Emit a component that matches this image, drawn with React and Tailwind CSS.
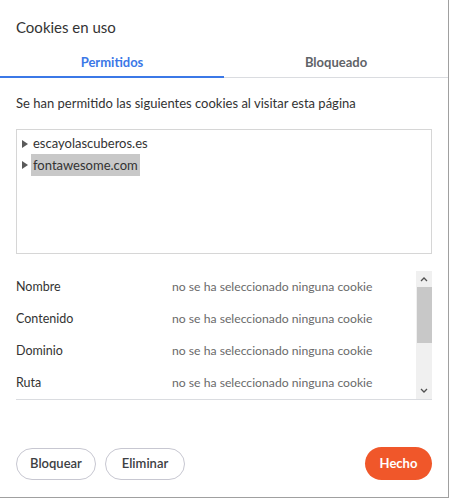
import React from 'react';

const rows = ['Nombre', 'Contenido', 'Dominio', 'Ruta'];

function Caret() {
  return (
    <svg width="6" height="8" viewBox="0 0 6 8" className="shrink-0">
      <path d="M0 0 L6 4 L0 8 Z" fill="#5a5a5a" />
    </svg>
  );
}

export default function App() {
  return (
    <div className="w-[450px] h-[499px] bg-white font-['Lato',sans-serif] text-[#333]">
      <div className="w-[449px] h-[498px] border-r border-b border-[#a0a0a0] flex flex-col">
        {/* Title */}
        <h1 className="px-4 pt-[16px] h-[50px] text-[15px] leading-[22px] text-[#333]">Cookies en uso</h1>

        {/* Tabs */}
        <div className="flex border-b border-[#dadce0] h-[28px]">
          <div className="w-[224px] flex justify-center text-[13px] font-bold text-[#3b78e7] border-b-2 border-[#3b78e7] -mb-px pt-[3px]">
            Permitidos
          </div>
          <div className="flex-1 flex justify-center text-[13px] font-bold text-[#5f6368] pt-[3px]">
            Bloqueado
          </div>
        </div>

        <p className="px-4 mt-[16px] text-[13px] leading-[18px]">Se han permitido las siguientes cookies al visitar esta página</p>

        {/* Tree */}
        <div className="mx-4 mt-[17px] h-[125px] border border-[#d6d6d6] px-[5px] pt-[3px] text-[13px]">
          <div className="flex items-center gap-[4px] h-[21px]">
            <Caret />
            <span className="px-[1px]">escayolascuberos.es</span>
          </div>
          <div className="flex items-center gap-[3px] h-[22px]">
            <Caret />
            <span className="bg-[#c8c8c8] px-[2px] leading-[22px]">fontawesome.com</span>
          </div>
        </div>

        {/* Details */}
        <div className="mx-4 mt-[17px] h-[129px] border-b border-[#dadce0] flex">
          <div className="flex-1 flex flex-col text-[12.5px]">
            {rows.map((r) => (
              <div key={r} className="flex h-[32px] items-center">
                <span className="w-[156px]">{r}</span>
                <span className="text-[#6a6a6a] text-[12.2px]">no se ha seleccionado ninguna cookie</span>
              </div>
            ))}
          </div>
          <div className="w-[16px] bg-[#f0f0f0] flex flex-col items-center">
            <svg width="8" height="16" viewBox="0 0 8 16"><path d="M1 10 L4 7 L7 10" fill="none" stroke="#505050" strokeWidth="1.3" /></svg>
            <div className="w-[15px] h-[56px] bg-[#c8c8c8]" />
            <div className="flex-1" />
            <svg width="8" height="16" viewBox="0 0 8 16"><path d="M1 6 L4 9 L7 6" fill="none" stroke="#505050" strokeWidth="1.3" /></svg>
          </div>
        </div>

        <div className="flex-1" />

        {/* Buttons */}
        <div className="flex items-center px-4 pb-[17px] gap-[9px]">
          <button className="h-[32px] w-[80px] rounded-full border border-[#c7c7d1] text-[13px] font-semibold text-[#3c4043]">Bloquear</button>
          <button className="h-[32px] w-[80px] rounded-full border border-[#c7c7d1] text-[13px] font-semibold text-[#3c4043]">Eliminar</button>
          <div className="flex-1" />
          <button className="h-[33px] w-[67px] rounded-full bg-[#f0572a] text-[13px] font-bold text-white">Hecho</button>
        </div>
      </div>
    </div>
  );
}
